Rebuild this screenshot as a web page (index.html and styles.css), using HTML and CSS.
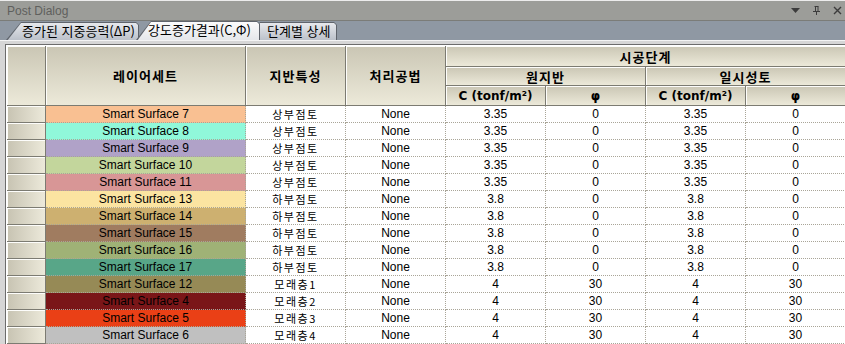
FILE: index.html
```html
<!DOCTYPE html>
<html lang="ko">
<head>
    <meta charset="UTF-8">
    <title>Post Dialog</title>
    <link rel="stylesheet" href="styles.css">
</head>
<body>
    <div class="titlebar">
        <span class="title">Post Dialog</span>
        <div class="tools">
            <svg width="9" height="9" viewBox="0 0 9 9"><path d="M0 2h9L4.5 7z" fill="#3c3c3c"/></svg>
            <svg width="9" height="9" viewBox="0 0 9 9"><path d="M2.5 0.5h4M3.5 0.5v5M6 0.5v5M1 5.5h7M4.5 5.5v3.5" stroke="#3c3c3c" fill="none"/></svg>
            <svg width="9" height="9" viewBox="0 0 9 9"><path d="M1 1l7 7M8 1l-7 7" stroke="#3c3c3c" stroke-width="1.4"/></svg>
        </div>
    </div>
    <div class="tabstrip">
        <div class="tab first"><span>증가된 지중응력(ΔP)</span></div>
        <div class="tab active"><span>강도증가결과(C,Φ)</span></div>
        <div class="tab last"><span>단계별 상세</span></div>
    </div>
    <div class="panel">
        <div class="grid-wrap">
            <table class="grid">
                <colgroup>
                    <col class="c-rh"><col class="c-name"><col><col><col><col><col><col>
                </colgroup>
                <thead>
                    <tr class="h1">
                        <th rowspan="3"></th>
                        <th rowspan="3">레이어세트</th>
                        <th rowspan="3">지반특성</th>
                        <th rowspan="3">처리공법</th>
                        <th colspan="4">시공단계</th>
                    </tr>
                    <tr class="h2">
                        <th colspan="2">원지반</th>
                        <th colspan="2">일시성토</th>
                    </tr>
                    <tr class="h3">
                        <th class="latin">C (tonf/m²)</th>
                        <th class="latin">φ</th>
                        <th class="latin">C (tonf/m²)</th>
                        <th class="latin">φ</th>
                    </tr>
                </thead>
                <tbody>
                    <tr><td class="rh"></td><td class="s7">Smart Surface 7</td><td class="ko">상부점토</td><td>None</td><td>3.35</td><td>0</td><td>3.35</td><td>0</td></tr>
                    <tr><td class="rh"></td><td class="s8">Smart Surface 8</td><td class="ko">상부점토</td><td>None</td><td>3.35</td><td>0</td><td>3.35</td><td>0</td></tr>
                    <tr><td class="rh"></td><td class="s9">Smart Surface 9</td><td class="ko">상부점토</td><td>None</td><td>3.35</td><td>0</td><td>3.35</td><td>0</td></tr>
                    <tr><td class="rh"></td><td class="s10">Smart Surface 10</td><td class="ko">상부점토</td><td>None</td><td>3.35</td><td>0</td><td>3.35</td><td>0</td></tr>
                    <tr><td class="rh"></td><td class="s11">Smart Surface 11</td><td class="ko">상부점토</td><td>None</td><td>3.35</td><td>0</td><td>3.35</td><td>0</td></tr>
                    <tr><td class="rh"></td><td class="s13">Smart Surface 13</td><td class="ko">하부점토</td><td>None</td><td>3.8</td><td>0</td><td>3.8</td><td>0</td></tr>
                    <tr><td class="rh"></td><td class="s14">Smart Surface 14</td><td class="ko">하부점토</td><td>None</td><td>3.8</td><td>0</td><td>3.8</td><td>0</td></tr>
                    <tr><td class="rh"></td><td class="s15">Smart Surface 15</td><td class="ko">하부점토</td><td>None</td><td>3.8</td><td>0</td><td>3.8</td><td>0</td></tr>
                    <tr><td class="rh"></td><td class="s16">Smart Surface 16</td><td class="ko">하부점토</td><td>None</td><td>3.8</td><td>0</td><td>3.8</td><td>0</td></tr>
                    <tr><td class="rh"></td><td class="s17">Smart Surface 17</td><td class="ko">하부점토</td><td>None</td><td>3.8</td><td>0</td><td>3.8</td><td>0</td></tr>
                    <tr><td class="rh"></td><td class="s12">Smart Surface 12</td><td class="ko">모래층1</td><td>None</td><td>4</td><td>30</td><td>4</td><td>30</td></tr>
                    <tr><td class="rh"></td><td class="s4">Smart Surface 4</td><td class="ko">모래층2</td><td>None</td><td>4</td><td>30</td><td>4</td><td>30</td></tr>
                    <tr><td class="rh"></td><td class="s5">Smart Surface 5</td><td class="ko">모래층3</td><td>None</td><td>4</td><td>30</td><td>4</td><td>30</td></tr>
                    <tr><td class="rh"></td><td class="s6">Smart Surface 6</td><td class="ko">모래층4</td><td>None</td><td>4</td><td>30</td><td>4</td><td>30</td></tr>
                </tbody>
            </table>
        </div>
    </div>
</body>
</html>
```

FILE: styles.css
```css
*{
    margin:0;
    padding:0;
    box-sizing:border-box;
}
body{
    width:845px;
    height:344px;
    overflow:hidden;
    background:#d6d6d6;
    font-family:"Liberation Sans", "Noto Sans CJK KR", sans-serif;
    font-size:12px;
    color:#000;
}

/* title bar */
.titlebar{
    height:21px;
    display:flex;
    align-items:center;
    justify-content:space-between;
    padding:0 3px 0 7px;
    background:#9c9d99;
    border-top:1px solid #ececec;
    border-bottom:1px solid #7b7c78;
}
.title{
    color:#5f605d;
    font-size:12px;
}
.tools{
    display:flex;
    align-items:center;
    gap:12px;
}

/* tabs */
.tabstrip{
    height:20px;
    display:flex;
    align-items:flex-end;
    padding-left:6px;
    background:#8f98a3;
    border-bottom:1px solid #f4f4f4;
}
.tab{
    height:18px;
    position:relative;
    background:#5f646c;
    clip-path:polygon(15px 0, calc(100% - 3px) 0, 100% 3px, 100% 100%, 0 100%);
    font-family:"Noto Sans CJK KR", sans-serif;
    font-size:13px;
    line-height:16px;
}
.tab>span{
    display:block;
    height:100%;
    padding:0 4px 0 15px;
    margin:1px 1px 0 1px;
    background:linear-gradient(#e6e8ec, #b9bfc8);
    clip-path:polygon(14px 0, calc(100% - 2px) 0, 100% 2px, 100% 100%, 0 100%);
    white-space:nowrap;
}
.tab.first{
    width:133px;
    z-index:2;
}
.tab.active{
    width:124px;
    height:19px;
    margin-left:-3px;
    z-index:3;
}
.tab.active>span{
    background:linear-gradient(#fbfbfb, #e4e6ea);
    padding-left:11px;
}
.tab.last{
    width:92px;
    margin-left:-15px;
    z-index:1;
}
.tab.last>span{
    padding-left:21px;
}

/* grid */
.panel{
    padding-top:3px;
    background:#d6d6d6;
}
.grid-wrap{
    margin-left:5px;
    border-top:1px solid #6c6c6c;
    border-left:1px solid #6c6c6c;
    overflow:hidden;
}
.grid{
    width:840px;
    table-layout:fixed;
    border-collapse:separate;
    border-spacing:0;
    border-top:1px solid #fff;
    border-left:1px solid #fff;
}
.grid col{ width:100px; }
.grid col.c-rh{ width:39px; }
.grid col.c-name{ width:200px; }

.grid th{
    background:linear-gradient(#cac6b4, #ece9d9);
    border-right:1px solid #7c7b72;
    border-bottom:1px solid #7c7b72;
    box-shadow:inset 1px 1px 0 #fdfdfb;
    font-family:"Noto Sans CJK KR", sans-serif;
    font-size:13px;
    font-weight:bold;
    letter-spacing:1px;
    line-height:17px;
    text-align:center;
    vertical-align:middle;
    padding:0;
    white-space:nowrap;
    overflow:hidden;
}
.grid th.latin{
    font-family:"DejaVu Sans", sans-serif;
    font-size:12px;
    letter-spacing:0;
    line-height:16px;
}
.h1{ height:21px; }
.h2{ height:19px; }
.h3{ height:20px; }

.grid td{
    height:17px;
    padding:0;
    text-align:center;
    vertical-align:middle;
    line-height:16px;
    white-space:nowrap;
    overflow:hidden;
    border-right:1px dotted #a9a598;
    border-bottom:1px dotted #a9a598;
    background:#fff;
}
.grid td.ko{
    font-family:"Noto Sans CJK KR", sans-serif;
    font-size:11px;
    letter-spacing:1.5px;
    line-height:16px;
}
.grid td.rh{
    background:linear-gradient(to right, #c7c3b2, #ece9da);
    border-right:1px solid #7c7b72;
    border-bottom:1px solid #7c7b72;
    box-shadow:inset 1px 1px 0 #fdfdfb;
}

/* layer colours */
.grid td.s7{ background:#f9c092; }
.grid td.s8{ background:#90f8da; }
.grid td.s9{ background:#b0a2c8; }
.grid td.s10{ background:#c3d69c; }
.grid td.s11{ background:#d89696; }
.grid td.s13{ background:#fbe4a1; }
.grid td.s14{ background:#cdb070; }
.grid td.s15{ background:#a07c60; }
.grid td.s16{ background:#9fb276; }
.grid td.s17{ background:#58a688; }
.grid td.s12{ background:#968a56; }
.grid td.s4{ background:#7a1618; }
.grid td.s5{ background:#ea4016; }
.grid td.s6{ background:#c0c0c0; }
```
